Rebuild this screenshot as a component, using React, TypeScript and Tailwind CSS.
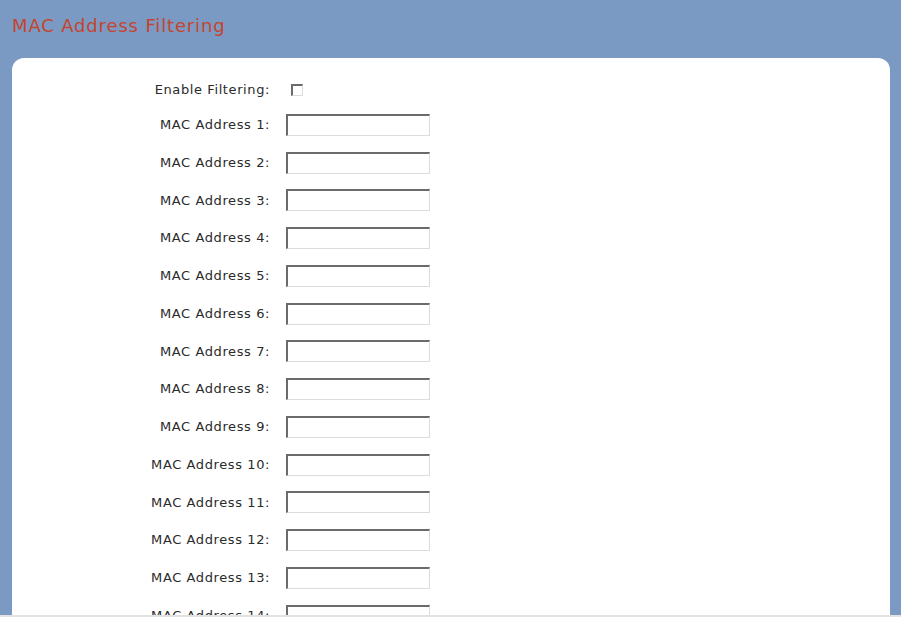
import React from "react";

const rows = Array.from({ length: 14 }, (_, i) => i + 1);

function TextBox() {
  return (
    <div className="w-[144px] h-[22px] bg-white border-t-2 border-l-2 border-r border-b border-t-[#6b6b6b] border-l-[#6b6b6b] border-r-[#dcdcdc] border-b-[#dcdcdc]" />
  );
}

export default function App() {
  return (
    <div
      className="w-[901px] h-[617px] overflow-hidden bg-[#7b9ac3] flex flex-col border-b-2 border-[#e2e2e2]"
      style={{ fontFamily: '"DejaVu Sans", Verdana, sans-serif' }}
    >
      <div className="h-[58px] shrink-0 flex items-center pl-[12px] pb-[8px]">
        <h1 className="text-[18px] text-[#c4452d] font-normal tracking-[0.85px]">MAC Address Filtering</h1>
      </div>
      <div className="flex-1 mx-[12px] mr-[11px] bg-white rounded-t-[12px] pt-[16px]">
        <div className="grid grid-cols-[258px_auto] gap-x-[16px] text-[13px] tracking-[0.6px] text-[#2a2a2a]">
          <div className="h-[32px] flex items-center justify-end">Enable Filtering:</div>
          <div className="h-[32px] flex items-center pl-[5px]">
            <div className="w-[12px] h-[12px] bg-white border-t-2 border-l-2 border-r border-b border-t-[#6b6b6b] border-l-[#6b6b6b] border-r-[#dcdcdc] border-b-[#dcdcdc]" />
          </div>
          {rows.map((n) => (
            <React.Fragment key={n}>
              <div className="h-[37.75px] flex items-center justify-end">MAC Address {n}:</div>
              <div className="h-[37.75px] flex items-center">
                <TextBox />
              </div>
            </React.Fragment>
          ))}
        </div>
      </div>
    </div>
  );
}
